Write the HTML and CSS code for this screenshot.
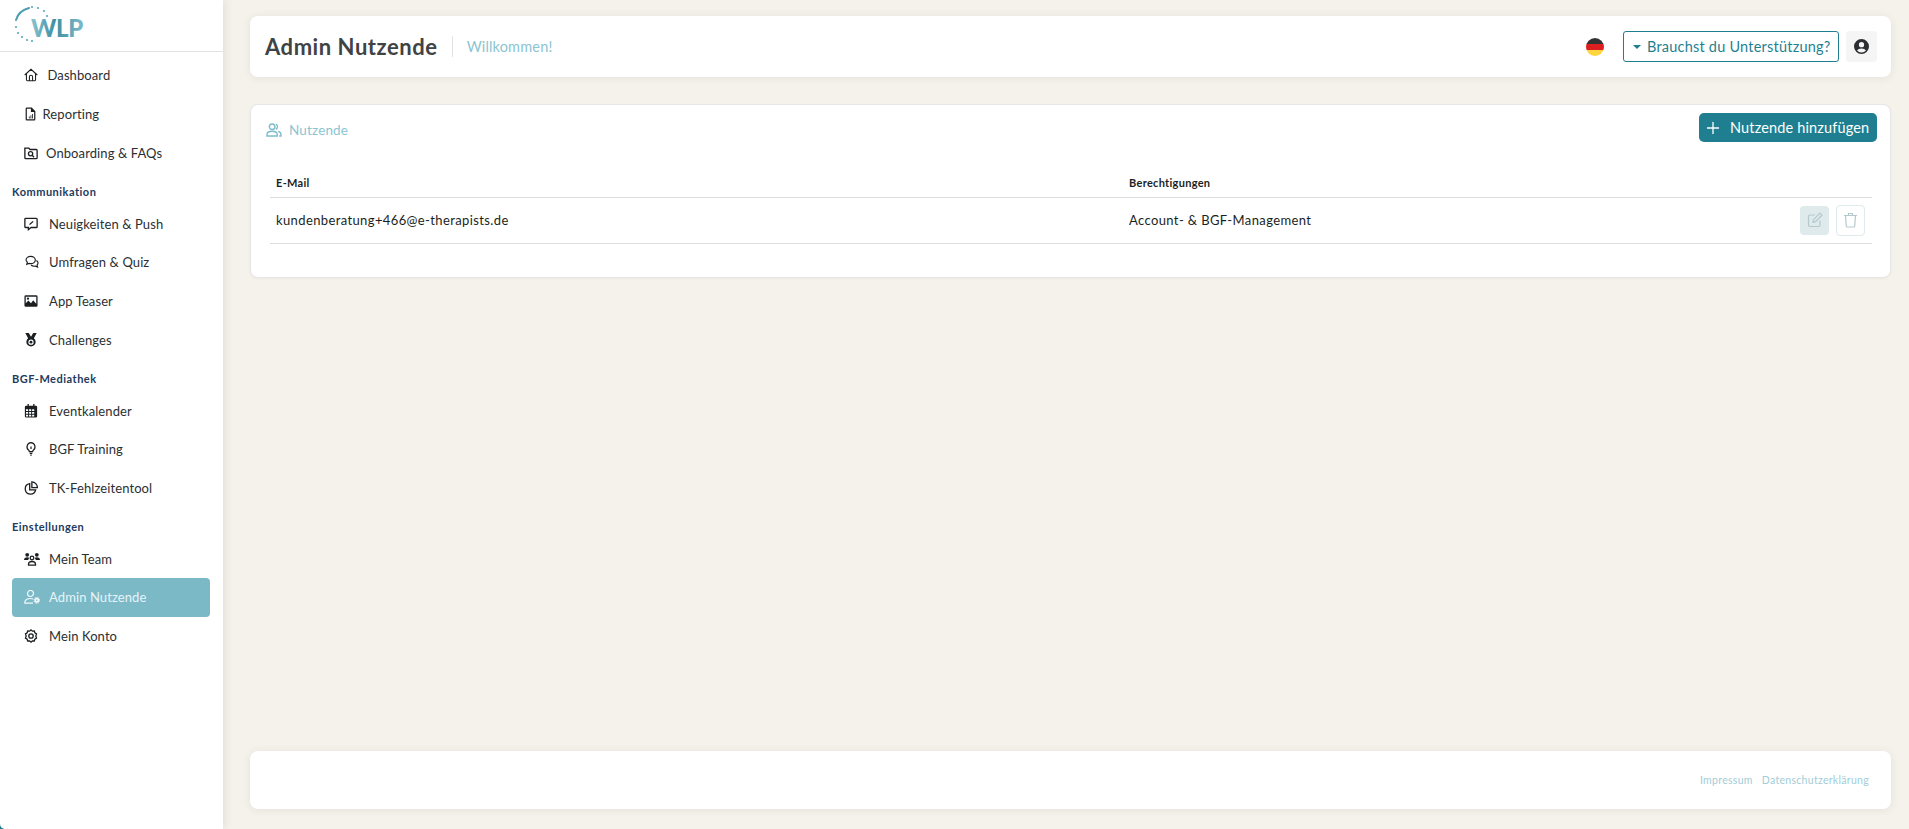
FILE: index.html
```html
<!DOCTYPE html>
<html lang="de">
<head>
<meta charset="utf-8">
<title>Admin Nutzende</title>
<link rel="stylesheet" href="styles.css">
</head>
<body>
<div class="app">
  <aside class="sidebar">
    <div class="logo">
      <svg width="100" height="51" viewBox="0 0 100 51">
        <defs><linearGradient id="lg" x1="0" x2="1" y1="0" y2="0"><stop offset="0" stop-color="#8cc4d0"/><stop offset=".45" stop-color="#3f8fa3"/><stop offset="1" stop-color="#7dbac8"/></linearGradient></defs>
        <path d="M16 20C17.500 14 22 10 29 8" fill="none" stroke="#4c9dae" stroke-width="2" stroke-linecap="round"/>
        <g fill="#5ea8b9"><circle cx="32" cy="7" r="1.100"/><circle cx="38" cy="8" r="1.100"/><circle cx="44" cy="11" r="1.100"/><circle cx="47" cy="16" r="1.100"/><circle cx="16" cy="27" r="1.100"/><circle cx="18" cy="33" r="1.100"/><circle cx="22" cy="37" r="1.100"/><circle cx="27" cy="40" r="1.100"/><circle cx="32" cy="41" r="1.100"/></g>
        <text x="31" y="37" class="logo-text" fill="url(#lg)">WLP</text>
      </svg>
    </div>
    <nav class="nav">
      <a class="item first"><svg class="ic" viewBox="0 0 16 16" fill="none" stroke="currentColor" stroke-width="1.200"><path d="M.8 8 8 1.500 15.200 8M2.800 6.500v7a1 1 0 0 0 1 1h8.400a1 1 0 0 0 1-1v-7M6.200 14.500V10a1.800 1.800 0 0 1 3.600 0v4.500"/></svg><span class="t1">Dashboard</span></a>
      <a class="item"><svg class="ic ic-file" viewBox="0 0 16 16"><path fill="currentColor" fill-rule="evenodd" d="M3.500 0h6l4.500 4.500v10A1.500 1.500 0 0 1 12.500 16h-9A1.500 1.500 0 0 1 2 14.500v-13A1.500 1.500 0 0 1 3.500 0ZM3.500 1.500v13h9V5.500H8.500v-4ZM6 11h1v2.500H6Zm2-1.500h1v4H8Zm2-1.500h1v5.500h-1Z"/></svg><span class="t2">Reporting</span></a>
      <a class="item"><svg class="ic" viewBox="0 0 16 16" fill="none" stroke="currentColor" stroke-width="1.500"><path d="M1 2.500h4.500L7 4h7a1 1 0 0 1 1 1v8.500a1 1 0 0 1-1 1H2a1 1 0 0 1-1-1Z"/><circle cx="7.500" cy="8.800" r="2.400"/><path d="m9.300 10.600 2.200 2.200"/></svg><span class="t3">Onboarding &amp; FAQs</span></a>
      <h6 class="label">Kommunikation</h6>
      <a class="item"><svg class="ic" viewBox="0 0 16 16" fill="none" stroke="currentColor" stroke-width="1.500"><path d="M2 1.500h12a1 1 0 0 1 1 1v8.500a1 1 0 0 1-1 1H8l-3 2.500V12H2a1 1 0 0 1-1-1V2.500a1 1 0 0 1 1-1Z"/><path d="m6 9.500.5-2 3.500-3 1 1-3.500 3.200Z" fill="currentColor" stroke="none"/></svg><span>Neuigkeiten &amp; Push</span></a>
      <a class="item"><svg class="ic ic-wide" viewBox="0 0 16 16" fill="none" stroke="currentColor" stroke-width="1.300"><path d="M6.500 1.500c3 0 5.300 1.800 5.300 4.200s-2.300 4.200-5.300 4.200c-.7 0-1.300-.1-1.900-.3L2 10.700l.7-2.500C1.700 7.400 1.200 6.600 1.200 5.700c0-2.400 2.300-4.200 5.300-4.200Z"/><path d="M13 6.300c1.200.7 1.900 1.700 1.900 2.900 0 .9-.4 1.700-1.100 2.300l.6 2.300-2.500-1.100c-2 .5-3.700 0-5-1.300"/></svg><span>Umfragen &amp; Quiz</span></a>
      <a class="item"><svg class="ic" viewBox="0 0 16 16"><path fill="currentColor" fill-rule="evenodd" d="M2 1.500h12A1.500 1.500 0 0 1 15.500 3v10a1.500 1.500 0 0 1-1.500 1.500H2A1.500 1.500 0 0 1 .5 13V3A1.500 1.500 0 0 1 2 1.500Zm0 1.500v7.500l3-3 3 3 2.500-3.500 3.500 4V3Zm2.500 1a1.300 1.300 0 1 1 0 2.600 1.300 1.300 0 0 1 0-2.600Z"/></svg><span>App Teaser</span></a>
      <a class="item"><svg class="ic" viewBox="0 0 16 16"><path fill="currentColor" fill-rule="evenodd" d="M1.500 0h4L8 4.200 10.500 0h4l-3.200 6a5.300 5.300 0 1 1-6.600 0ZM8 7.500a3 3 0 1 0 0 6 3 3 0 0 0 0-6Z"/><circle cx="8" cy="10.500" r="1.600" fill="currentColor"/></svg><span>Challenges</span></a>
      <h6 class="label">BGF-Mediathek</h6>
      <a class="item"><svg class="ic" viewBox="0 0 16 16"><path fill="currentColor" fill-rule="evenodd" d="M4 0h1.500v2h5V0H12v2h1.500A1.500 1.500 0 0 1 15 3.500V14a1.500 1.500 0 0 1-1.500 1.500h-11A1.500 1.500 0 0 1 1 14V3.500A1.500 1.500 0 0 1 2.500 2H4ZM2.300 6v2h2.400V6Zm3.500 0v2h2.400V6Zm3.500 0v2h2.400V6ZM2.300 9.200v2h2.400v-2Zm3.500 0v2h2.400v-2Zm3.500 0v2h2.400v-2Zm-7 3.200v2h2.400v-2Zm3.500 0v2h2.400v-2Zm3.500 0v2h2.400v-2Z"/></svg><span>Eventkalender</span></a>
      <a class="item"><svg class="ic" viewBox="0 0 16 16" fill="none" stroke="currentColor" stroke-width="1.400"><path d="M8 .8a4.700 4.700 0 0 0-2.600 8.500c.4.400.6 1 .7 1.700h3.800c.1-.7.300-1.300.7-1.700A4.700 4.700 0 0 0 8 .8Z"/><path d="M6.500 13h3M7.200 15h1.600M8 5v3"/></svg><span>BGF Training</span></a>
      <a class="item"><svg class="ic" viewBox="0 0 16 16" fill="none" stroke="currentColor" stroke-width="1.500"><path d="M6.500 3a6 6 0 1 0 6.800 7.200H6.500Z"/><path d="M9 1v6.500h6.300A6.500 6.500 0 0 0 9 1Z"/></svg><span>TK-Fehlzeitentool</span></a>
      <h6 class="label">Einstellungen</h6>
      <a class="item"><svg class="ic ic-wide" viewBox="0 0 16 14"><g fill="currentColor"><circle cx="3.200" cy="2.800" r="1.900"/><circle cx="12.800" cy="2.800" r="1.900"/><path d="M0 8c0-1.800 1.400-2.800 3.200-2.800 1 0 1.600.3 2 .7C4.600 6.600 4.300 7.300 4.300 8Zm16 0c0-1.800-1.400-2.800-3.200-2.800-1 0-1.600.3-2 .7.600.7.900 1.400.9 2.100Z"/></g><circle cx="8" cy="6" r="1.800" fill="none" stroke="currentColor" stroke-width="1.300"/><path d="M4.500 13.200v-.7c0-2 1.600-3 3.500-3s3.500 1 3.500 3v.7Z" fill="none" stroke="currentColor" stroke-width="1.300"/></svg><span>Mein Team</span></a>
      <a class="item active"><svg class="ic ic-wide" viewBox="0 0 16 14"><circle cx="6.500" cy="3.500" r="3" fill="none" stroke="currentColor" stroke-width="1.200"/><path d="M9 9c-.8-.3-1.600-.5-2.500-.5C3.500 8.500.8 10 .8 12.500v.7H9" fill="none" stroke="currentColor" stroke-width="1.200"/><circle cx="12.800" cy="10.300" r="1.600" fill="none" stroke="currentColor" stroke-width="1.800"/><circle cx="12.800" cy="10.300" r="3" fill="none" stroke="currentColor" stroke-width="1" stroke-dasharray="1.300 1.100"/></svg><span>Admin Nutzende</span></a>
      <a class="item"><svg class="ic" viewBox="0 0 16 16" fill="none" stroke="currentColor" stroke-width="1.500"><path d="m8 1 1.600 1.500 2.200-.2.600 2.100 1.900 1.200-.8 2.400.8 2.400-1.900 1.200-.6 2.100-2.200-.2L8 15l-1.600-1.500-2.200.2-.6-2.100-1.900-1.200.8-2.400-.8-2.400 1.900-1.200.6-2.100 2.200.2Z"/><circle cx="8" cy="8" r="2.500"/></svg><span>Mein Konto</span></a>
    </nav>
  </aside>
  <main class="main">
    <header class="card topbar">
      <h1 class="title">Admin Nutzende</h1>
      <span class="welcome">Willkommen!</span>
      <div class="top-right">
        <span class="flag"></span>
        <button class="help"><span class="caret"></span>Brauchst du Unterstützung?</button>
        <button class="profile"><svg width="15" height="15" viewBox="0 0 16 16"><path fill="#2b2f33" fill-rule="evenodd" d="M8 0a8 8 0 1 1 0 16A8 8 0 0 1 8 0Zm0 3.300a2.800 2.800 0 1 0 0 5.600 2.800 2.800 0 0 0 0-5.600ZM3.300 12.300A5.800 5.800 0 0 0 8 14.500a5.800 5.800 0 0 0 4.700-2.200c-.8-1.300-2.500-2.200-4.700-2.200s-3.900.9-4.700 2.200Z"/></svg></button>
      </div>
    </header>
    <section class="card panel">
      <div class="panel-head">
        <div class="panel-title">
          <svg width="16" height="14" viewBox="0 0 17 15" fill="none" stroke="#7fbcca" stroke-width="1.500"><circle cx="6.500" cy="4" r="3"/><path d="M1 14v-1.500C1 10 3.500 8.800 6.500 8.800S12 10 12 12.500V14Z"/><path d="M10.500 1.300a3 3 0 0 1 0 5.400M13 9c1.800.5 3 1.700 3 3.500V14h-2"/></svg>
          <span>Nutzende</span>
        </div>
        <button class="add"><svg width="14" height="14" viewBox="0 0 14 14" stroke="#fff" stroke-width="1.300"><path d="M7 1v12M1 7h12"/></svg>Nutzende hinzufügen</button>
      </div>
      <table class="tbl">
        <thead><tr><th class="c1">E-Mail</th><th>Berechtigungen</th><th></th></tr></thead>
        <tbody><tr>
          <td>kundenberatung+466@e-therapists.de</td>
          <td>Account- &amp; BGF-Management</td>
          <td class="acts">
            <div class="act-row">
              <button class="act edit"><svg width="16" height="16" viewBox="0 0 16 16" fill="none" stroke="#b5c8cc" stroke-width="1.200"><path d="M13 8.500V13a1.500 1.500 0 0 1-1.500 1.500H3A1.500 1.500 0 0 1 1.500 13V4.500A1.500 1.500 0 0 1 3 3h5"/><path d="m6 10.200.5-2.500L13 1.200l2 2-6.500 6.500Z"/></svg></button>
              <button class="act del"><svg width="15" height="16" viewBox="0 0 15 16" fill="none" stroke="#b5c8cc" stroke-width="1.200"><path d="M1 3.500h13M5.500 3.500V1.500h4v2M2.500 3.500l.8 10.500a1.200 1.200 0 0 0 1.200 1h6a1.200 1.200 0 0 0 1.200-1l.8-10.500"/></svg></button>
            </div>
          </td>
        </tr></tbody>
      </table>
    </section>
    <footer class="card foot">
      <a>Impressum</a><a>Datenschutzerklärung</a>
    </footer>
  </main>
</div>
</body>
</html>
```

FILE: styles.css
```css
* { box-sizing: border-box; }
html, body { margin: 0; height: 100%; }
body { background: #f5f2ec; font-family: "Lato", "Noto Sans", sans-serif; color: #2b2f33; overflow: hidden; }
button { font-family: inherit; cursor: pointer; }
.app { display: flex; height: 829px; background: linear-gradient(to right, #1f7f91 4px, #f5f2ec 4px); }

.sidebar { position: relative; width: 223px; flex: none; background: #fff; border-bottom-left-radius: 5px; box-shadow: 2px 0 8px rgba(60, 50, 30, .10); z-index: 1; }
.logo { height: 52px; border-bottom: 1px solid #e2e2e2; }
.logo svg { display: block; }
.logo-text { font-family: "Lato", sans-serif; font-weight: 900; font-size: 24px; letter-spacing: -.3px; }
.nav { display: flex; flex-direction: column; padding-top: 4px; }
.item { display: flex; align-items: center; height: 38.700px; margin: 0 13px 0 12px; padding-left: 12px; border-radius: 4px; font-size: 13px; letter-spacing: .1px; color: #2b2f33; }
.item span { margin-left: 11px; }
.item .t1 { margin-left: 9.500px; }
.item .t2 { margin-left: 5.500px; }
.item .t3 { margin-left: 8px; }
.ic { width: 14px; height: 14px; flex: none; color: #1c1f22; }
.ic-wide { width: 16px; margin-right: -2px; }
.ic-file { width: 13px; }
.active { background: #7bb9c7; color: #e6f4f7; }
.active .ic { color: #f0f8fa; }
.label { margin: 0; height: 32.200px; padding: 12.500px 0 0 12px; font-size: 11px; line-height: 14px; font-weight: 700; letter-spacing: .5px; color: #233a5c; }

.main { flex: 1; min-width: 0; display: flex; flex-direction: column; padding: 16px 18px 20px 27px; }
.card { background: #fff; border-radius: 8px; box-shadow: 0 1px 8px rgba(70, 60, 40, .09); }

.topbar { display: flex; align-items: center; height: 61px; padding: 0 14px 0 15px; }
.title { margin: 0; padding-right: 14px; font-size: 22px; line-height: 21px; font-weight: 700; letter-spacing: .55px; color: #3f4346; border-right: 1px solid #dfe3e6; }
.welcome { margin-left: 14px; font-size: 14.500px; letter-spacing: .17px; color: #8cc5d2; }
.top-right { margin-left: auto; display: flex; align-items: center; }
.flag { width: 18px; height: 18px; margin-right: 19px; border-radius: 50%; background: linear-gradient(#333 0 33.300%, #dd1f1f 33.300% 66.600%, #ffd53f 66.600%); }
.help { display: flex; align-items: center; width: 216px; height: 31px; padding: 0 0 0 9px; background: #fff; border: 1px solid #1f7f91; border-radius: 3px; font-size: 14.500px; letter-spacing: .22px; color: #1f7f91; white-space: nowrap; }
.caret { width: 0; height: 0; margin-right: 6px; border: 4px solid transparent; border-top-color: #1f7f91; border-bottom: 0; }
.profile { display: flex; align-items: center; justify-content: center; width: 31px; height: 31px; margin-left: 7px; padding: 0; background: #f5f5f5; border: 0; border-radius: 4px; }

.panel { margin-top: 27px; height: 174px; padding: 8px 13px 0 15px; border: 1px solid #e6e6e8; box-shadow: 0 1px 3px rgba(70, 60, 40, .05); border-radius: 8px; }
.panel-head { display: flex; justify-content: space-between; align-items: flex-start; }
.panel-title { display: flex; align-items: center; gap: 7px; margin-top: 7px; height: 20px; font-size: 13.500px; letter-spacing: .15px; color: #8cc5d2; }
.add { display: flex; align-items: center; gap: 10px; width: 178px; height: 29px; padding: 0 0 0 7px; background: #1f7f91; color: #fff; border: 0; border-radius: 5px; font-size: 14.500px; letter-spacing: .15px; white-space: nowrap; }
.tbl { width: calc(100% - 9px); margin: 33px 5px 0 4px; border-collapse: collapse; font-size: 13px; letter-spacing: .38px; color: #1c1f22; }
.tbl th { height: 22px; padding: 0 0 6px 6px; text-align: left; font-size: 11px; font-weight: 700; letter-spacing: .3px; border-bottom: 1px solid #dcdee0; }
.tbl .c1 { width: 853px; }
.tbl td { height: 46px; padding: 0 0 0 6px; border-bottom: 1px solid #dcdee0; }
.tbl .acts { width: 300px; padding-right: 7px; }
.act-row { display: flex; justify-content: flex-end; align-items: center; gap: 7px; }
.act { display: inline-flex; align-items: center; justify-content: center; width: 29px; height: 29px; padding: 0; border-radius: 4px; }
.edit { background: #deeaec; border: 0; }
.del { height: 31px; background: #fff; border: 1px solid #deeaec; }

.foot { margin-top: auto; height: 58px; display: flex; align-items: center; justify-content: flex-end; gap: 9px; padding-right: 22px; font-size: 10.500px; letter-spacing: .3px; color: #9fcdd8; }
```
